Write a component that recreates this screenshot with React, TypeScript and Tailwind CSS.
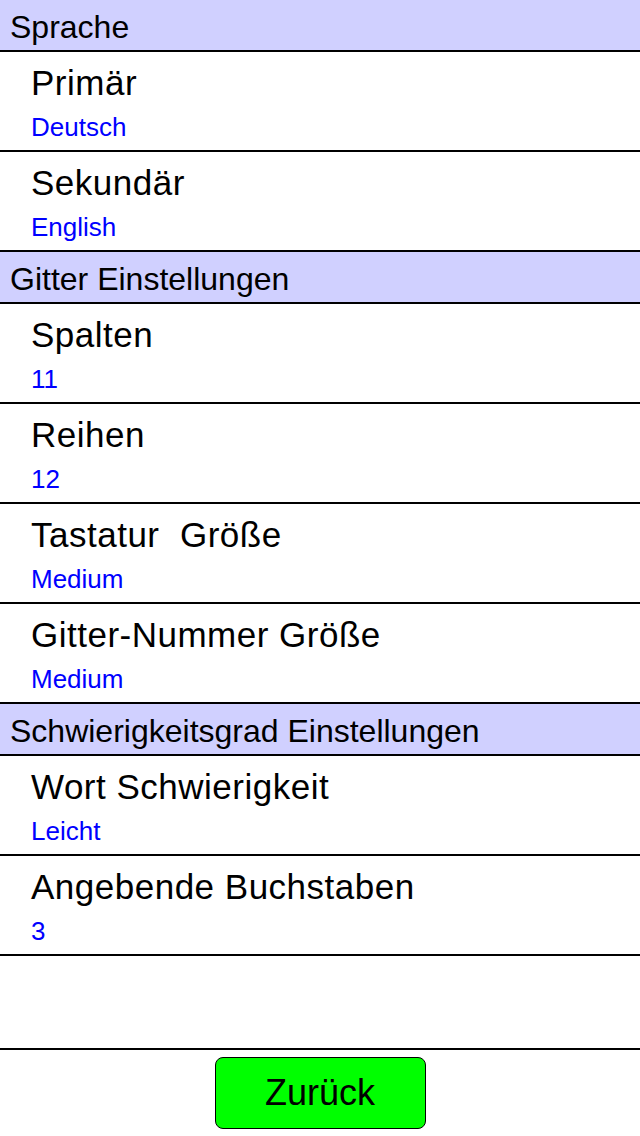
import React from "react";

const font = { fontFamily: '"Liberation Sans", Arial, Helvetica, sans-serif' };

function Header({ title }: { title: string }) {
  return (
    <>
      <div className="h-[50px] bg-[#d0d0ff] pl-[10px] pt-[3px] text-[32px] leading-[49px] text-black overflow-hidden whitespace-nowrap">
        {title}
      </div>
      <div className="h-[2px] bg-black" />
    </>
  );
}

function Row({ title, value }: { title: string; value: string }) {
  return (
    <>
      <div className="h-[98px] pl-[31px] pt-[11px] bg-white overflow-hidden whitespace-pre">
        <div className="text-[35px] leading-[40px] tracking-[0.5px] text-black">{title}</div>
        <div className="mt-[9px] text-[26px] leading-[30px] text-[#0000ff]">{value}</div>
      </div>
      <div className="h-[2px] bg-black" />
    </>
  );
}

export default function App() {
  return (
    <div className="w-[640px] h-[1136px] bg-white flex flex-col overflow-hidden" style={font}>
      <Header title="Sprache" />
      <Row title="Primär" value="Deutsch" />
      <Row title="Sekundär" value="English" />
      <Header title="Gitter Einstellungen" />
      <Row title="Spalten" value="11" />
      <Row title="Reihen" value="12" />
      <Row title="Tastatur  Größe" value="Medium" />
      <Row title="Gitter-Nummer Größe" value="Medium" />
      <Header title="Schwierigkeitsgrad Einstellungen" />
      <Row title="Wort Schwierigkeit" value="Leicht" />
      <Row title="Angebende Buchstaben" value="3" />
      <div className="flex-1" />
      <div className="h-[2px] bg-black" />
      <div className="h-[86px] flex items-center justify-center">
        <button className="w-[211px] h-[72px] bg-[#00ff00] border-[1.5px] border-black rounded-[8px] text-[36px] leading-[40px] text-black">
          Zurück
        </button>
      </div>
    </div>
  );
}
